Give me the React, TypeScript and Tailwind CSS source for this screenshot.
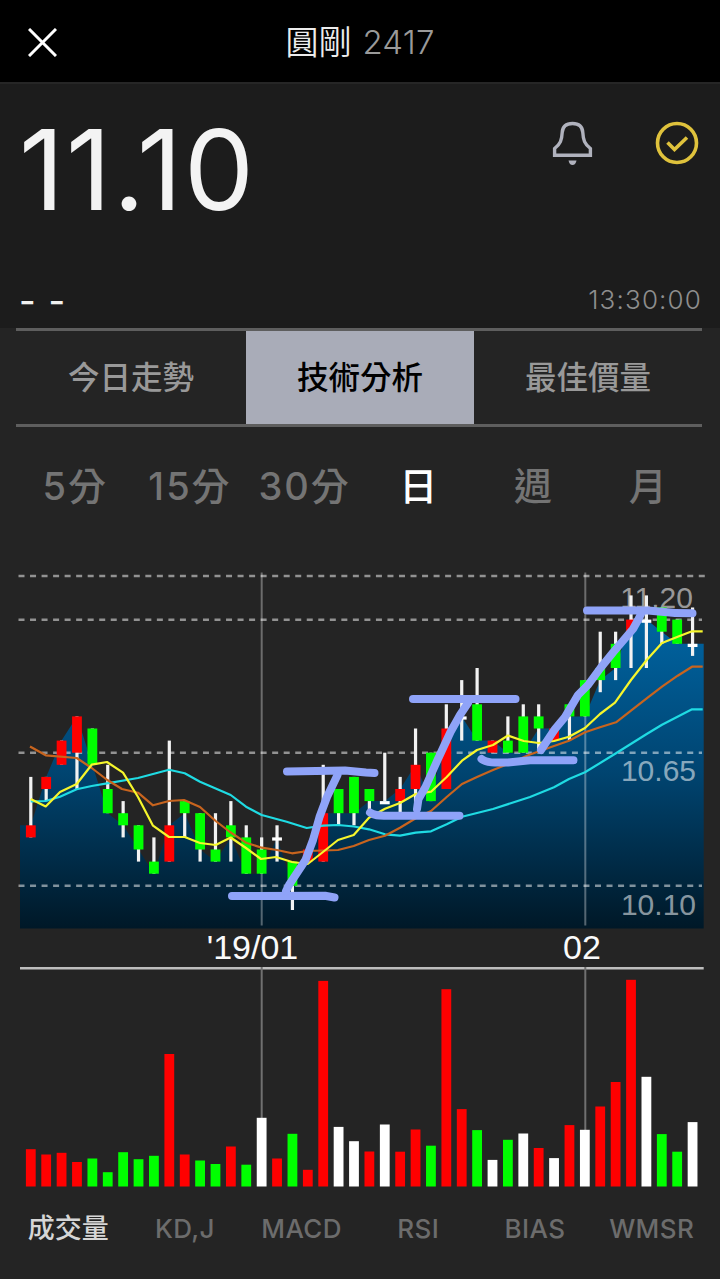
import React from 'react';
import clsx from 'clsx';

type Candle = [open: number, close: number, high: number, low: number];
type Point = [number, number];
type Tone = 'up' | 'down' | 'flat';

const TONES: Record<Tone, string> = {
  up: '#ff0000',
  down: '#00ff00',
  flat: '#ffffff',
};

// prices in ticks of 0.05 relative to 10.65
const candles: Candle[] = [
  [-7, -6, -2, -7],
  [-3, -2, -2, -4],
  [-1, 1, 1, -1],
  [0, 3, 3, -3],
  [2, -1, 2, -1],
  [-3, -5, -1, -5],
  [-5, -6, -4, -7],
  [-6, -8, -6, -9],
  [-9, -10, -7, -10],
  [-9, -6, 1, -9],
  [-4, -5, -4, -7],
  [-5, -8, -5, -9],
  [-8, -9, -5, -9],
  [-6, -7, -4, -9],
  [-7, -10, -6, -10],
  [-8, -10, -7, -10],
  [-7, -7, -6, -9],
  [-9, -11, -9, -13],
  [-9, -8, -8, -9],
  [-9, -5, -1, -9],
  [-3, -5, -3, -6],
  [-2, -5, -2, -6],
  [-3, -4, -3, -5],
  [-4, -4, 0, -4],
  [-4, -3, -2, -5],
  [-3, -1, 2, -5],
  [0, -4, 0, -4],
  [-3, 2, 4, -3],
  [3, 3, 6, 1],
  [4, 1, 7, 1],
  [0, 1, 1, 0],
  [1, 0, 3, 0],
  [3, 0, 4, 0],
  [3, 2, 4, 0],
  [1, 2, 2, 1],
  [4, 3, 4, 1],
  [6, 3, 6, 3],
  [7, 6, 10, 5],
  [9, 7, 10, 6],
  [10, 11, 13, 7],
  [11, 11, 13, 7],
  [12, 10, 12, 9],
  [11, 9, 11, 9],
  [9, 9, 12, 8],
];

const volumes: [number, Tone][] = [
  [37.3, 'up'], [32, 'up'], [33.7, 'up'], [24.5, 'up'],
  [28, 'down'], [14.3, 'down'], [34.3, 'down'], [27.3, 'down'], [30.7, 'down'],
  [132.5, 'up'], [32, 'up'], [26, 'down'], [22.5, 'down'], [40, 'up'], [21.8, 'down'],
  [68.7, 'flat'], [28, 'up'], [52.7, 'down'], [16.7, 'up'], [205.6, 'up'],
  [59.6, 'flat'], [45.3, 'flat'], [35, 'up'], [62, 'flat'], [34.8, 'up'],
  [57, 'up'], [40.8, 'down'], [197.3, 'up'], [77.4, 'up'], [56.4, 'down'],
  [26.6, 'flat'], [46.7, 'down'], [53, 'flat'], [38.5, 'up'], [28.4, 'flat'],
  [61.4, 'up'], [56.7, 'flat'], [80, 'up'], [104.5, 'up'], [206.7, 'up'],
  [109.7, 'flat'], [52.4, 'down'], [34.8, 'down'], [64.4, 'flat'],
];

const ma5: Point[] = [
  [30.7, 799], [45.7, 806.5], [60, 792], [76.7, 784], [91.7, 764.7], [107, 762],
  [123, 772.7], [138, 797], [153, 825.7], [169, 837], [184.7, 837], [200, 843],
  [215.7, 845], [230.7, 837.5], [246, 848], [261, 859], [276, 857], [292, 862],
  [307.7, 864], [323, 852], [338, 840], [353.7, 835], [369, 817.7], [385, 808.7],
  [400, 803], [415.7, 794], [431, 791.7], [446.7, 777], [462, 760.7], [477, 750],
  [493, 745], [508, 735.5], [523.7, 741], [538.7, 743], [554, 741], [569, 736.7],
  [585, 728], [600, 714], [615, 702.7], [631, 680], [646.7, 660], [662, 643],
  [677.7, 636.7], [692, 631.3], [702.7, 631.3],
];

const ma10: Point[] = [
  [30, 746.5], [45.7, 755.3], [76.7, 758], [91.7, 768], [107.3, 780], [122, 789],
  [138, 792.7], [153, 805.3], [169, 801], [184, 800], [200, 807], [215.7, 821],
  [230, 832], [246, 842.7], [261.7, 847.7], [277, 850], [292, 853.3], [307.7, 851],
  [338, 850], [353.7, 846], [369, 840], [385, 835.7], [400, 827.7], [415.7, 818.3],
  [431, 811], [446.7, 797], [462, 784], [477, 777], [493, 770], [508, 764],
  [530, 754.5], [554, 746], [569, 740.7], [585, 732.3], [600, 727.3], [616, 722.3],
  [631, 710.7], [646.7, 698.3], [662, 686.7], [677.7, 675.7], [692, 666.7], [702.7, 666.7],
];

const ma20: Point[] = [
  [30.7, 801.3], [45.7, 801], [60, 796.7], [76.7, 789.3], [91.7, 786], [107, 783.3],
  [138, 778], [169, 769.7], [184.7, 773.3], [200, 781.7], [230.7, 795], [246, 806.7],
  [261.7, 815], [286.7, 821.7], [306.7, 828], [323, 825.7], [338, 825], [354, 826.5],
  [369, 829.3], [385, 834.3], [400, 835.7], [415.7, 832.7], [431, 831.3], [446.7, 824.3],
  [462, 816.7], [493, 809], [530, 797], [554, 787.3], [569, 779], [585, 772.3],
  [616, 753.3], [646.7, 734], [662, 724.7], [692, 709.3], [702.7, 709.3],
];

// freehand marks drawn over the chart
const marks = [
  'M287 771.5L345 770.5L366 772.5L374.5 773',
  'M232 896L325 895.7L334.5 897.5',
  'M337.5 775L327 797L319.5 817L313 840L305.5 860L289 885L286 891',
  'M413 699H515.5',
  'M370 812.5C375 816 379 815.7 386 815.7H459.5',
  'M468 703L460 715L450.5 732L437.5 760L425.5 787L418.5 799L417 809',
  'M481.5 759C486 763 495 762.8 508 762.5L530 760.3H573.5',
  'M541 750L555 729L565 717L578 695L588 685L600.5 668L613 652.5L633 629L638 620L642 612',
  'M587 610.5L648 610.5Q670 613.2 692.5 613.2',
];

const rangeTabs = ['今日走勢', '技術分析', '最佳價量'];
const periods = ['5分', '15分', '30分', '日', '週', '月'];
const indicators = ['成交量', 'KD,J', 'MACD', 'RSI', 'BIAS', 'WMSR'];
const monthLines = [261.7, 585.3];

const xAt = (i: number) => 30.8 + i * 15.39;
const yAt = (tick: number) => 752.7 - tick * 12.1;
const toPoints = (points: Point[]) => points.map((p) => p.join(',')).join(' ');

const areaPoints: Point[] = [
  [20, 928.5],
  [20, yAt(candles[0][1])],
  ...candles.map((c, i): Point => [xAt(i), yAt(c[1])]),
  [703.7, yAt(candles[candles.length - 1][1])],
  [703.7, 928.5],
];

const Header: React.FC = () => (
  <header className="h-[84px] bg-black border-b-2 border-[#262626] flex items-center px-7">
    <svg className="w-[29px] h-[29px] shrink-0 mt-[2px]" viewBox="0 0 29 29" fill="none" stroke="#fff" strokeWidth="3">
      <path d="M1 1L28 28M28 1L1 28" />
    </svg>
    <h1 className="flex-1 flex items-center justify-center gap-[11px] pt-[3px] pr-[29px] text-[33px] leading-none font-[350] text-[#ececec]">
      <span>圓剛</span>
      <span className="text-[#9a9a9a] font-light tracking-[0.2px]">2417</span>
    </h1>
  </header>
);

const Quote: React.FC = () => (
  <section className="h-[244px] bg-[#1c1c1c] pl-[19px] pr-[18px] flex flex-col justify-between">
    <div className="flex justify-between">
      <div className="mt-[30px] text-[111px] leading-[112px] font-normal text-[#f3f3f3] tracking-[1.8px]">11.10</div>
      <div className="flex gap-[62px] pt-[37px] pr-[3px]">
        <svg className="w-[41px] h-[46px]" viewBox="0 0 41 46" fill="none">
          <path
            d="M20.5 2.5C13.5 2.5 10.5 6.5 10.2 11.5C9.8 19 8.5 23 2.6 27.5V34.3H38.4V27.5C32.5 23 31.2 19 30.8 11.5C30.5 6.5 27.5 2.5 20.5 2.5Z"
            stroke="#b0b2bd"
            strokeWidth="3.4"
          />
          <path d="M16.5 39.5H24.5Q23.5 44 20.5 44T16.5 39.5Z" fill="#b0b2bd" />
        </svg>
        <svg className="w-[44px] h-[44px]" viewBox="0 0 44 44" fill="none" stroke="#dfc23c">
          <circle cx="22" cy="22" r="19.5" strokeWidth="3.6" />
          <path d="M12.5 21.5L19.5 28.5L32 16.5" strokeWidth="3.6" />
        </svg>
      </div>
    </div>
    <div className="flex items-center justify-between pb-[9px]">
      <span className="pt-[3px] text-[36px] leading-9 font-medium text-[#f0f0f0] tracking-[1.6px] whitespace-pre">- -</span>
      <span className="text-[26px] leading-9 font-light text-[#8e8e8e] tracking-[1.15px]">13:30:00</span>
    </div>
  </section>
);

const PriceChart: React.FC = () => (
  <svg className="block w-[720px] h-[406px]" viewBox="0 561 720 406">
    <defs>
      <linearGradient id="area" gradientUnits="userSpaceOnUse" x1="0" y1="619" x2="0" y2="929">
        <stop offset="0" stopColor="#0064a2" />
        <stop offset="0.5" stopColor="#004470" />
        <stop offset="1" stopColor="#001827" />
      </linearGradient>
    </defs>
    <polygon points={toPoints(areaPoints)} fill="url(#area)" />
    <g stroke="#ffffff" strokeOpacity="0.5" strokeWidth="2.6" strokeDasharray="6 5.53">
      <path d="M18.5 576H705.5" />
      <path d="M18.5 619.7H702" />
      <path d="M18.5 752.7H702" />
      <path d="M18.5 885.8H702" />
    </g>
    <g stroke="#ffffff" strokeOpacity="0.33" strokeWidth="2">
      {monthLines.map((x) => (
        <path key={x} d={`M${x} 572.5V925.5`} />
      ))}
    </g>
    <g className="font-['Liberation_Sans',sans-serif] text-[30px]" fill="#ffffff" fillOpacity="0.55" textAnchor="end">
      <text x="693" y="608">11.20</text>
      <text x="696" y="781">10.65</text>
      <text x="696" y="914.5">10.10</text>
    </g>
    {candles.map(([open, close, high, low], i) => {
      const x = xAt(i);
      const top = yAt(Math.max(open, close));
      const bodyHeight = Math.abs(open - close) * 12.1 || 3.2;
      const tone: Tone = close > open ? 'up' : close < open ? 'down' : 'flat';
      return (
        <g key={i}>
          <rect x={x - 1.6} y={yAt(high)} width="3.2" height={(high - low) * 12.1} fill="#f2f2f2" />
          <rect x={x - 4.9} y={top} width="9.8" height={bodyHeight} fill={TONES[tone]} />
        </g>
      );
    })}
    <g fill="none" strokeWidth="2.2" strokeLinejoin="round">
      <polyline points={toPoints(ma20)} stroke="#1fdbe3" />
      <polyline points={toPoints(ma10)} stroke="#c8641e" />
      <polyline points={toPoints(ma5)} stroke="#f6f62c" />
    </g>
    <g fill="none" stroke="#8fa3f8" strokeWidth="8" strokeLinecap="round" strokeLinejoin="round">
      {marks.map((d) => (
        <path key={d} d={d} />
      ))}
    </g>
    <g className="font-['Liberation_Sans',sans-serif] text-[34px]" fill="#fafafa" textAnchor="middle">
      <text x="252.5" y="959">'19/01</text>
      <text x="582" y="959">02</text>
    </g>
  </svg>
);

const VolumeChart: React.FC = () => (
  <svg className="block w-[720px] h-[220px]" viewBox="0 967 720 220">
    <path d="M20 968.3H703.7" stroke="#bdbdbd" strokeWidth="2.6" />
    {monthLines.map((x) => (
      <path key={x} d={`M${x} 967V1186`} stroke="#707070" strokeWidth="2" />
    ))}
    {volumes.map(([height, tone], i) => (
      <rect key={i} x={xAt(i) - 4.9} y={1186.5 - height} width="9.8" height={height} fill={TONES[tone]} />
    ))}
  </svg>
);

const App: React.FC = () => {
  return (
    <div className="w-[720px] h-[1279px] overflow-hidden bg-[#242424] flex flex-col font-['Inter','Noto_Sans_CJK_TC',sans-serif]">
      <Header />
      <Quote />
      <nav className="h-[99px] shrink-0 ml-4 mr-[18px] grid grid-cols-[230px_228px_228px] border-y-[3px] border-[#5e5e5e]">
        {rangeTabs.map((tab) => (
          <button
            key={tab}
            className={clsx(
              'text-[31.5px] leading-none font-medium',
              tab === '技術分析' ? 'bg-[#a9acb8] text-black' : 'text-[#999999]'
            )}
          >
            {tab}
          </button>
        ))}
      </nav>
      <nav className="h-[134px] shrink-0 ml-[18px] mr-[14px] pb-[16px] grid grid-cols-6 items-center">
        {periods.map((period) => (
          <button
            key={period}
            className={clsx(
              'text-[38px] leading-none font-medium tracking-[2px] whitespace-nowrap',
              period === '日' ? 'text-white' : 'text-[#747474]'
            )}
          >
            {period}
          </button>
        ))}
      </nav>
      <PriceChart />
      <VolumeChart />
      <nav className="h-[82px] shrink-0 mx-[10px] pt-[1px] grid grid-cols-6 items-center">
        {indicators.map((name) => (
          <button
            key={name}
            className={clsx(
              'leading-none font-medium',
              name === '成交量' ? 'text-[27px] text-[#d6d6d6]' : 'text-[26px] tracking-[0.4px] text-[#6c6c6c]'
            )}
          >
            {name}
          </button>
        ))}
      </nav>
    </div>
  );
};

export default App;
